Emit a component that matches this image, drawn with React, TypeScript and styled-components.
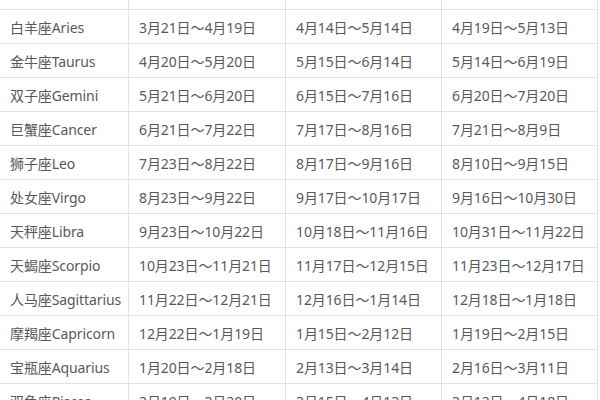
import React from "react";
import styled, { createGlobalStyle } from "styled-components";

const Global = createGlobalStyle`
  html, body { margin: 0; padding: 0; background: #ffffff; overflow: hidden; }
  body { width: 600px; height: 400px; }
`;

const Page = styled.div`
  width: 600px;
  height: 400px;
  overflow: hidden;
  background: #ffffff;
`;

const Grid = styled.div`
  display: grid;
  grid-template-columns: 128px 156px 155px 155px;
  grid-auto-rows: 33px;
  gap: 1px;
  padding: 1px;
  width: max-content;
  margin: -25px 0 0 -1px;
  background: #e2e2e2;
  font-family: "Noto Sans", "Noto Sans CJK SC", sans-serif;
  font-size: 14px;
  color: #595959;
`;

const Cell = styled.div<{ $head?: boolean }>`
  background: #ffffff;
  display: flex;
  align-items: ${(p) => (p.$head ? "flex-end" : "center")};
  padding-left: 10px;
  padding-bottom: ${(p) => (p.$head ? "10px" : "0")};
  box-sizing: border-box;
  white-space: nowrap;
  letter-spacing: -0.1px;
  color: ${(p) => (p.$head ? "#b0b0b0" : "#595959")};
`;

const header = ["星座", "传统日期", "恒星日期", "回归日期"];

const rows: string[][] = [
  ["白羊座Aries", "3月21日～4月19日", "4月14日～5月14日", "4月19日～5月13日"],
  ["金牛座Taurus", "4月20日～5月20日", "5月15日～6月14日", "5月14日～6月19日"],
  ["双子座Gemini", "5月21日～6月20日", "6月15日～7月16日", "6月20日～7月20日"],
  ["巨蟹座Cancer", "6月21日～7月22日", "7月17日～8月16日", "7月21日～8月9日"],
  ["狮子座Leo", "7月23日～8月22日", "8月17日～9月16日", "8月10日～9月15日"],
  ["处女座Virgo", "8月23日～9月22日", "9月17日～10月17日", "9月16日～10月30日"],
  ["天秤座Libra", "9月23日～10月22日", "10月18日～11月16日", "10月31日～11月22日"],
  ["天蝎座Scorpio", "10月23日～11月21日", "11月17日～12月15日", "11月23日～12月17日"],
  ["人马座Sagittarius", "11月22日～12月21日", "12月16日～1月14日", "12月18日～1月18日"],
  ["摩羯座Capricorn", "12月22日～1月19日", "1月15日～2月12日", "1月19日～2月15日"],
  ["宝瓶座Aquarius", "1月20日～2月18日", "2月13日～3月14日", "2月16日～3月11日"],
  ["双鱼座Pisces", "2月19日～3月20日", "3月15日～4月13日", "3月12日～4月18日"],
];

export default function App() {
  return (
    <Page>
      <Global />
      <Grid>
        {header.map((h) => (
          <Cell key={h} $head>
            {h}
          </Cell>
        ))}
        {rows.map((r) =>
          r.map((c, i) => <Cell key={r[0] + i}>{c}</Cell>)
        )}
      </Grid>
    </Page>
  );
}
